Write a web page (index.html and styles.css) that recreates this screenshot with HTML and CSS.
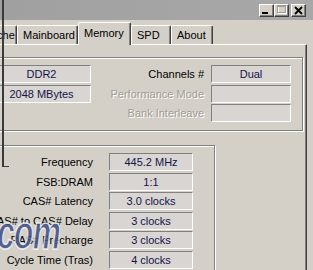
FILE: index.html
```html
<!DOCTYPE html>
<html lang="en">
<head>
  <meta charset="UTF-8">
  <title>CPU-Z Memory</title>
  <link rel="stylesheet" href="styles.css">
</head>
<body>
  <div class="titlebar">
    <div class="win-btn">
      <svg width="13" height="11" viewBox="0 0 13 11"><rect x="2" y="7" width="6" height="2" fill="#000"/></svg>
    </div>
    <div class="win-btn">
      <svg width="13" height="11" viewBox="0 0 13 11"><rect x="3.5" y="1.5" width="8" height="7" fill="none" stroke="#fff"/><rect x="2.5" y="0.5" width="8" height="7" fill="none" stroke="#a09c94"/><rect x="2" y="1" width="9" height="1" fill="#a09c94"/></svg>
    </div>
    <div class="win-btn close">
      <svg width="13" height="11" viewBox="0 0 13 11"><path d="M3 2 L10 9 M10 2 L3 9" stroke="#000" stroke-width="1.8"/></svg>
    </div>
  </div>

  <div class="tabs">
    <div class="tab tab-cut">Cache</div>
    <div class="tab tab-mainboard">Mainboard</div>
    <div class="tab tab-memory active">Memory</div>
    <div class="tab tab-spd">SPD</div>
    <div class="tab tab-about">About</div>
  </div>

  <div class="panel">
    <div class="group general">
      <div class="field">DDR2</div>
      <div class="label"><span>Channels #</span></div>
      <div class="field">Dual</div>

      <div class="field">2048 MBytes</div>
      <div class="label disabled"><span>Performance Mode</span></div>
      <div class="field"></div>

      <div></div>
      <div class="label disabled"><span>Bank Interleave</span></div>
      <div class="field"></div>
    </div>

    <div class="group timings">
      <div class="label"><span>Frequency</span></div>
      <div class="field">445.2 MHz</div>
      <div class="label"><span>FSB:DRAM</span></div>
      <div class="field">1:1</div>
      <div class="label"><span>CAS# Latency</span></div>
      <div class="field">3.0 clocks</div>
      <div class="label"><span>RAS# to CAS# Delay</span></div>
      <div class="field">3 clocks</div>
      <div class="label"><span>RAS# Precharge</span></div>
      <div class="field">3 clocks</div>
      <div class="label"><span>Cycle Time (Tras)</span></div>
      <div class="field">4 clocks</div>
    </div>
  </div>

  <!-- edge of the window lying over this one -->
  <div class="overlap-edge"></div>
  <div class="watermark">com</div>
</body>
</html>
```

FILE: styles.css
```css
:root {
  --face: #d4d0c8;
  --shadow: #808080;
  --dark: #404040;
  --light: #ffffff;
  --value: #14144a;
}

body {
  margin: 0;
  width: 313px;
  height: 270px;
  overflow: hidden;
  position: relative;
  background: var(--face);
  font-family: "Liberation Sans", Arial, sans-serif;
  font-size: 11px;
  color: #000;
}

/* title bar */
.titlebar {
  height: 20px;
  box-sizing: border-box;
  padding: 4px 7px 0 0;
  background: linear-gradient(90deg, #a0a0a0, #a8a8a8);
  display: flex;
  justify-content: flex-end;
  align-items: flex-start;
}

.win-btn {
  width: 15px;
  height: 13px;
  box-sizing: border-box;
  background: var(--face);
  border-top: 1px solid var(--light);
  border-left: 1px solid var(--light);
  border-right: 1px solid var(--dark);
  border-bottom: 1px solid var(--dark);
  box-shadow: inset -1px -1px 0 var(--shadow);
  display: flex;
}

.win-btn svg {
  display: block;
}

.win-btn.close {
  margin-left: 2px;
}

/* tabs */
.tabs {
  height: 24px;
  display: flex;
  align-items: flex-end;
}

.tab {
  height: 19px;
  box-sizing: border-box;
  padding-left: 5px;
  line-height: 18px;
  white-space: nowrap;
  overflow: hidden;
  border-top: 1px solid var(--light);
  border-left: 1px solid var(--light);
  border-right: 1px solid var(--dark);
  border-radius: 2px 2px 0 0;
  box-shadow: inset -1px 0 0 var(--shadow);
}

.tab-cut {
  width: 40px;
  margin-left: -23px;
}

.tab-mainboard { width: 61px; }
.tab-memory { width: 53px; }
.tab-spd { width: 40px; }
.tab-about { width: 42px; }

.tab.active {
  height: 23px;
  margin-bottom: -1px;
  line-height: 20px;
  position: relative;
  z-index: 1;
  background: var(--face);
}

/* page panel */
.panel {
  margin-left: -20px;
  width: 327px;
  height: 230px;
  box-sizing: border-box;
  border-top: 1px solid var(--light);
  border-left: 1px solid var(--light);
  border-right: 1px solid var(--dark);
  box-shadow: inset -1px 0 0 var(--shadow);
  overflow: hidden;
}

.group {
  box-sizing: border-box;
  border: 1px solid var(--shadow);
  box-shadow: 1px 1px 0 var(--light), inset 1px 1px 0 var(--light);
  display: grid;
  grid-auto-rows: 18px;
  row-gap: 1.6px;
  align-content: start;
}

.general {
  margin: 12px 3px 0 9px;
  height: 74px;
  padding: 7px 11px 0 1px;
  grid-template-columns: 99px 1fr 80px;
  column-gap: 7px;
}

.timings {
  margin: 14px 0 0 9px;
  width: 225px;
  height: 140px;
  padding: 7px 21px 0 0;
  grid-template-columns: 1fr 84px;
  column-gap: 16px;
}

.label {
  display: flex;
  justify-content: flex-end;
  min-width: 0;
  line-height: 18px;
  white-space: nowrap;
}

.label span {
  flex-shrink: 0;
}

.label.disabled {
  color: #a09c94;
  text-shadow: 1px 1px 0 var(--light);
}

.field {
  box-sizing: border-box;
  border-top: 1px solid var(--shadow);
  border-left: 1px solid var(--shadow);
  border-right: 1px solid var(--light);
  border-bottom: 1px solid var(--light);
  background: #d8d5d2;
  color: var(--value);
  line-height: 16px;
  text-align: center;
  white-space: nowrap;
}

/* overlays */
.overlap-edge {
  position: absolute;
  left: 2px;
  top: 0;
  width: 5px;
  height: 166px;
  border-left: 2px solid #3a3a3a;
  border-bottom: 1px solid #3a3a3a;
}

.watermark {
  position: absolute;
  left: -3px;
  top: 210px;
  font-size: 48px;
  line-height: 46px;
  font-weight: bold;
  font-style: italic;
  color: rgba(66, 80, 132, 0.88);
  -webkit-text-stroke: 1.5px rgba(255, 255, 255, 0.8);
  transform: scaleX(0.66);
  transform-origin: left top;
  letter-spacing: -1px;
}
```
